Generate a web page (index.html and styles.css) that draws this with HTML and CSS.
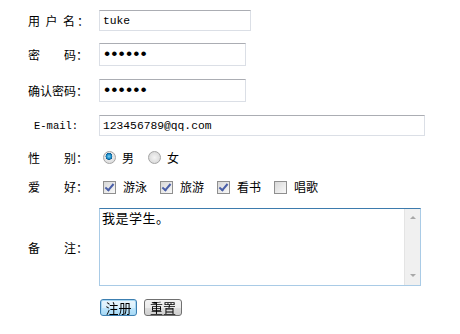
FILE: index.html
```html
<!DOCTYPE html>
<html lang="zh-CN">
  <head>
    <meta charset="UTF-8" />
    <title>用户注册</title>
    <link rel="stylesheet" href="styles.css">
  </head>
  <body>
    <form class="regForm">
      <div class="label"><span class="spread">用户</span><span class="tail">名</span>：</div>
      <div class="field"><input type="text" class="txt user" value="tuke" /></div>

      <div class="label">密　　码：</div>
      <div class="field"><input type="password" class="txt pwd" value="123456" /></div>

      <div class="label">确认密码：</div>
      <div class="field"><input type="password" class="txt pwd" value="123456" /></div>

      <div class="label mail">E-mail:</div>
      <div class="field"><input type="text" class="txt email" value="123456789@qq.com" /></div>

      <div class="label">性　　别：</div>
      <div class="field choices">
        <label class="opt radioOpt"><input type="radio" name="sex" checked /><span>男</span></label>
        <label class="opt radioOpt"><input type="radio" name="sex" /><span>女</span></label>
      </div>

      <div class="label">爱　　好：</div>
      <div class="field choices">
        <label class="opt boxOpt"><input type="checkbox" checked /><span>游泳</span></label>
        <label class="opt boxOpt"><input type="checkbox" checked /><span>旅游</span></label>
        <label class="opt boxOpt"><input type="checkbox" checked /><span>看书</span></label>
        <label class="opt boxOpt"><input type="checkbox" /><span>唱歌</span></label>
      </div>

      <div class="label">备　　注：</div>
      <div class="field">
        <div class="memo">
          <textarea class="memoText" autofocus>我是学生。</textarea>
          <div class="scroll">
            <span class="arrow up"></span>
            <span class="arrow down"></span>
          </div>
        </div>
      </div>

      <div class="label"></div>
      <div class="field buttons">
        <button type="button" class="btn active">注册</button>
        <button type="reset" class="btn">重置</button>
      </div>
    </form>
  </body>
</html>
```
FILE: styles.css
```css
body {
  margin: 0;
  background: #fff;
  color: #000;
  font-family: "Noto Sans CJK SC", "Liberation Sans", sans-serif;
  font-size: 12px;
}
.regForm {
  display: grid;
  grid-template-columns: 87px 1fr;
  grid-template-rows: 21px 24px 24px 22px 17px 18px 79px 17px;
  row-gap: 12px;
  padding: 10px 0 0 12px;
}
.label {
  align-self: center;
  justify-self: start;
  padding-left: 16px;
  white-space: nowrap;
  line-height: 14px;
}
.spread {
  letter-spacing: 5.5px;
}
.tail {
  margin-right: 2px;
}
.label.mail {
  padding-left: 22px;
  font-family: "Liberation Mono", monospace;
  font-size: 10.5px;
}
.field {
  align-self: start;
}
.txt {
  box-sizing: border-box;
  margin: 0;
  padding: 0 3px;
  border: 1px solid #dbdfe6;
  border-top-color: #abadb3;
  font-family: "Liberation Mono", monospace;
  font-size: 11.3px;
  color: #000;
  outline: none;
  display: block;
}
.user {
  width: 152px;
  height: 21px;
}
.pwd {
  width: 147px;
  height: 23px;
  padding-left: 2px;
  font-size: 17px;
  letter-spacing: -2.9px;
}
.email {
  width: 326px;
  height: 21px;
}
.choices {
  display: flex;
  align-items: center;
  height: 100%;
}
.opt {
  display: flex;
  align-items: center;
  margin-left: 4px;
}
.radioOpt {
  margin-right: 10px;
}
.boxOpt {
  margin-right: 9px;
}
.opt span {
  line-height: 14px;
}
.radioOpt span {
  margin-left: 6px;
}
.boxOpt span {
  margin-left: 7px;
}
.opt input {
  -webkit-appearance: none;
  appearance: none;
  margin: 0;
  width: 13px;
  height: 13px;
  box-sizing: border-box;
}
.radioOpt input {
  border-radius: 50%;
  border: 1px solid #a4a4a4;
  background: radial-gradient(circle at 50% 50%, #f4f4f4 0, #dcdcdc 70%, #cfcfcf 100%);
}
.radioOpt input:checked {
  background: radial-gradient(circle at 45% 40%, #7fd0f4 0, #1e8fc9 2.2px, #0a5a93 3.3px, #e8e8e8 3.6px, #d6d6d6 100%);
}
.boxOpt input {
  border: 1px solid #8f8f8f;
  background: linear-gradient(135deg, #d8d8d8, #f8f8f8);
  position: relative;
}
.boxOpt input:checked::after {
  content: "";
  position: absolute;
  left: 3px;
  top: 0px;
  width: 3px;
  height: 7px;
  border: solid #4a5fa8;
  border-width: 0 2px 2px 0;
  transform: rotate(40deg);
}
.memo {
  display: flex;
  width: 322px;
  height: 78px;
  box-sizing: border-box;
  border: 1px solid #a9cbe6;
  border-top-color: #3d7bad;
}
.memoText {
  flex: 1;
  margin: 0;
  padding: 1px 2px;
  border: none;
  outline: none;
  resize: none;
  font-family: "Noto Sans CJK SC", sans-serif;
  font-size: 13px;
  letter-spacing: 0.5px;
  line-height: 15px;
  color: #000;
}
.scroll {
  width: 16px;
  background: #f0f0f0;
  border-left: 1px solid #e4e4e4;
  display: flex;
  flex-direction: column;
  justify-content: space-between;
  align-items: center;
  padding: 7px 0 8px;
  box-sizing: border-box;
}
.arrow {
  width: 0;
  height: 0;
  border-left: 3.5px solid transparent;
  border-right: 3.5px solid transparent;
}
.arrow.up {
  border-bottom: 3px solid #a8a8a8;
}
.arrow.down {
  border-top: 3px solid #a8a8a8;
}
.buttons {
  display: flex;
  gap: 7px;
  padding-left: 1px;
}
.btn {
  margin: 0;
  height: 17px;
  padding: 0 5px;
  font-family: "Noto Sans CJK SC", sans-serif;
  font-size: 13px;
  line-height: 13px;
  color: #000;
  border: 1px solid #707070;
  border-radius: 3px;
  background: linear-gradient(#f2f2f2 0, #ebebeb 50%, #dddddd 51%, #cfcfcf 100%);
}
.btn.active {
  width: 37px;
  padding: 0 4px;
  border-color: #3c7fb1;
  box-shadow: inset 0 0 0 1px #a7d8f4;
  background: linear-gradient(#eaf6fd 0, #d9f0fc 50%, #bee6fd 51%, #a7d9f5 100%);
}
```
